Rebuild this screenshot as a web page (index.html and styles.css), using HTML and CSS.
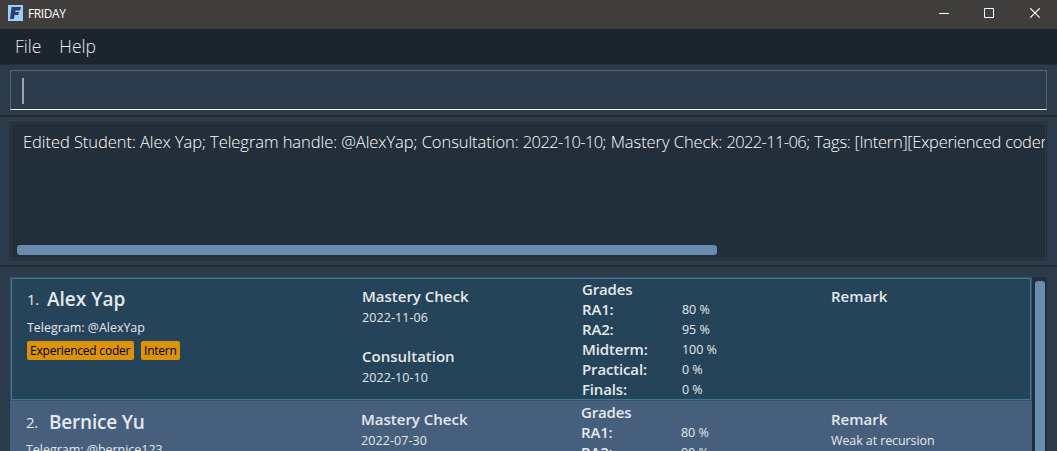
FILE: index.html
```
<!DOCTYPE html>
<html lang="en">
<head>
<meta charset="utf-8">
<title>FRIDAY</title>
<link rel="stylesheet" href="styles.css">
</head>
<body>
<header class="titlebar">
  <svg class="logo" width="15" height="16" viewBox="0 0 15 16"><path fill="#9dcdff" d="M0 0h15v16H0z"/><path fill="#2c4068" d="M3.500 2H13l-.8 3.500H7.500L7.200 7H11l-.7 3H6.500l-.8 4H2z"/></svg>
  <span class="app-name">FRIDAY</span>
  <svg class="controls" width="103" height="12" viewBox="0 0 103 12"><g fill="none" stroke="#fff"><path d="M0 5.500h10M45.500.5h9v9h-9z"/><path stroke-width="1.200" d="M91.300.3l9.400 9.400M100.700.3l-9.400 9.400"/></g></svg>
</header>
<nav class="menubar"><span class="file">File</span><span class="help">Help</span></nav>
<section class="command-pane"><div class="command-box"><div class="caret"></div></div></section>
<section class="result-pane"><div class="result-frame"><div class="result-box">
  <p class="result-text">Edited Student: Alex Yap; Telegram handle: @AlexYap; Consultation: <span class="digits">2022-10-10</span>; Mastery Check: <span class="digits">2022-11-06</span>; <span class="tag-list">Tags: [Intern][Experienced coder]</span></p>
  <div class="h-thumb"></div>
</div></div></section>
<main class="list-pane">
  <div class="list">
    <article class="card selected">
      <div class="student">
        <h2><span class="index">1.</span><span class="name">Alex Yap</span></h2>
        <p class="small telegram">Telegram: @AlexYap</p>
        <div class="tags"><span class="tag coder">Experienced coder</span><span class="tag intern">Intern</span></div>
      </div>
      <div class="dates"><h3>Mastery Check</h3><p class="small date">2022-11-06</p><h3 class="consultation">Consultation</h3><p class="small date">2022-10-10</p></div>
      <div class="grades"><h3>Grades</h3><span></span><h3>RA1:</h3><p class="small">80 %</p><h3>RA2:</h3><p class="small">95 %</p><h3>Midterm:</h3><p class="small">100 %</p><h3>Practical:</h3><p class="small">0 %</p><h3>Finals:</h3><p class="small">0 %</p></div>
      <div class="remark"><h3>Remark</h3></div>
    </article>
    <article class="card even">
      <div class="student">
        <h2><span class="index">2.</span><span class="name">Bernice Yu</span></h2>
        <p class="small telegram">Telegram: @bernice123</p>
      </div>
      <div class="dates"><h3>Mastery Check</h3><p class="small date">2022-07-30</p></div>
      <div class="grades"><h3>Grades</h3><span></span><h3>RA1:</h3><p class="small">80 %</p><h3>RA2:</h3><p class="small">90 %</p></div>
      <div class="remark"><h3>Remark</h3><p class="small">Weak at recursion</p></div>
    </article>
  </div>
  <div class="v-track"><div class="v-thumb"></div></div>
</main>
</body>
</html>
```
FILE: styles.css
```
* { box-sizing: border-box; }
body { margin: 0; width: 1057px; height: 451px; overflow: hidden; display: flex; flex-direction: column; background: #2b3b4b; color: #e4e9ed; font-family: "Open Sans", "Noto Sans", sans-serif; }
h2, h3, p { margin: 0; }
.titlebar { flex: none; height: 29px; display: flex; background: #403e3c; color: #fff; }
.logo { margin: 5px 0 0 8px; }
.app-name { margin-left: 5px; font-size: 12px; line-height: 27px; letter-spacing: -.4px; }
.controls { margin: 8px 15px 0 auto; }
.menubar { flex: none; height: 36px; padding-left: 15px; display: flex; gap: 18px; background: #1c252e; border-bottom: 1px solid #2b2c2d; font-size: 17.500px; font-weight: 300; line-height: 34px; }
.command-pane { flex: none; height: 52px; padding: 5px 10px 0; border-bottom: 2px solid #2b2b2b; }
.command-box { height: 40px; padding: 7px 12px; border: 1px solid #55666f; border-bottom-color: #fff; }
.caret { width: 2px; height: 26px; background: #9ba4ab; margin-left: -1px; }
.result-pane { flex: none; height: 150px; padding: 5px 10px; border-bottom: 2px solid #2b2b2b; }
.result-frame { height: 138px; border: 1px solid #2b2b2b; padding: 1px 1px 2px; }
.result-box { height: 134px; overflow: hidden; display: flex; flex-direction: column; background: #222e3a; border-radius: 2px; padding: 7px 0 3px 11px; }
.result-text { white-space: nowrap; color: #fff; font-size: 16.500px; font-weight: 300; line-height: 22px; letter-spacing: -.06px; }
.digits { letter-spacing: -.62px; }
.tag-list { letter-spacing: -.28px; }
.h-thumb { margin: auto 0 0 -6px; width: 700px; height: 10px; border-radius: 3px; background: #698bae; }
.list-pane { flex: 1; padding: 10px 10px 0; display: flex; min-height: 0; overflow: hidden; }
.list { width: 1022px; }
.card { height: 124px; display: grid; grid-template-columns: 335px 220px 249px 1fr; padding: 0 0 0 16px; }
.selected { padding-top: 1px; background: #254359; border: 1px solid #3a5268; box-shadow: inset 0 0 0 1px #3e7b91; }
.even { background: #465f7d; }
.student { padding-top: 9px; }
.selected .student { padding-top: 8px; }
h2 { display: flex; height: 25px; line-height: 24px; }
.index { font-size: 15px; font-weight: 500; width: 20px; letter-spacing: -.4px; }
.even .index { width: 23px; }
.name { font-size: 19px; font-weight: 600; letter-spacing: 0; }
.even .name { letter-spacing: -.2px; }
.telegram { padding-top: 7px; }
.even .telegram { padding-top: 6px; }
.small { font-size: 12.500px; line-height: 18px; font-weight: 400; letter-spacing: -.03px; }
.date { letter-spacing: .08px; }
h3 { font-size: 15px; line-height: 20px; font-weight: 600; letter-spacing: 0; }
.grades h3 { letter-spacing: -.15px; }
.tags { display: flex; gap: 7px; margin-top: 4px; }
.tag { height: 19px; border-radius: 2px; background: #dc930a; color: #000; font-size: 12px; font-weight: 500; line-height: 19px; padding: 0 3px; white-space: nowrap; letter-spacing: -.22px; }
.coder { width: 107px; }
.intern { width: 39px; }
.dates, .remark { padding-top: 8px; }
.selected .dates, .selected .remark { padding-top: 7px; }
.dates .small, .remark .small { padding-top: 3px; line-height: 18px; }
.remark .small { letter-spacing: -.1px; }
.consultation { margin-top: 19px; }
.grades { display: grid; grid-template-columns: 100px 1fr; grid-auto-rows: 20px; padding-top: 1px; }
.selected .grades { padding-top: 0; }
.grades .small { line-height: 21px; }
.remark { padding-left: 1px; }
.selected .remark { padding-left: 0; }
.v-track { width: 15px; background: #222e3a; padding: 4px 2px 0 3px; overflow: hidden; }
.v-thumb { height: 220px; border-radius: 3px; background: #698bae; }
```
